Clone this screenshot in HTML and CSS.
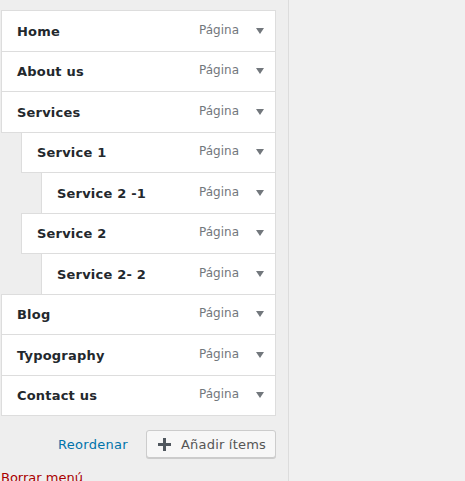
FILE: index.html
```html
<!DOCTYPE html>
<html lang="es">
<head>
  <meta charset="UTF-8" />
  <title>Menú</title>
  <link rel="stylesheet" href="styles.css">
</head>
<body>
  <div class="panel">
    <ul class="menu">
      <li class="item depth-0"><span class="item-title">Home</span><span class="item-type">Página</span><span class="toggle"></span></li>
      <li class="item depth-0"><span class="item-title">About us</span><span class="item-type">Página</span><span class="toggle"></span></li>
      <li class="item depth-0"><span class="item-title">Services</span><span class="item-type">Página</span><span class="toggle"></span></li>
      <li class="item depth-1"><span class="item-title">Service 1</span><span class="item-type">Página</span><span class="toggle"></span></li>
      <li class="item depth-2"><span class="item-title">Service 2 -1</span><span class="item-type">Página</span><span class="toggle"></span></li>
      <li class="item depth-1"><span class="item-title">Service 2</span><span class="item-type">Página</span><span class="toggle"></span></li>
      <li class="item depth-2"><span class="item-title">Service 2- 2</span><span class="item-type">Página</span><span class="toggle"></span></li>
      <li class="item depth-0"><span class="item-title">Blog</span><span class="item-type">Página</span><span class="toggle"></span></li>
      <li class="item depth-0"><span class="item-title">Typography</span><span class="item-type">Página</span><span class="toggle"></span></li>
      <li class="item depth-0"><span class="item-title">Contact us</span><span class="item-type">Página</span><span class="toggle"></span></li>
    </ul>

    <div class="actions">
      <a href="#" class="reorder">Reordenar</a>
      <button class="add-items">
        <svg class="plus" width="13" height="13" viewBox="0 0 13 13"><path d="M6.5 0v13M0 6.5h13" stroke="#50575e" stroke-width="3"/></svg>
        Añadir ítems
      </button>
    </div>

    <a href="#" class="delete">Borrar menú</a>
  </div>
  <div class="preview"></div>
</body>
</html>
```

FILE: styles.css
```css
body {
  margin: 0;
  background-color: #eeeeee;
  font-family: "DejaVu Sans", sans-serif;
  display: flex;
  height: 100vh;
  overflow: hidden;
}

.panel {
  width: 289px;
  padding: 10px 0 0 1px;
  border-right: 1px solid #dcdcdc;
  box-sizing: border-box;
}

.preview {
  flex: 1;
  background-color: #f0f0f0;
}

.menu {
  list-style: none;
  margin: 0;
  padding: 0;
  width: 275px;
}

.item {
  display: flex;
  align-items: center;
  height: 41.5px;
  margin-top: -1px;
  padding: 0 11px 0 15px;
  background-color: #fff;
  border: 1px solid #dddddd;
  box-sizing: border-box;
}

.item:first-child {
  margin-top: 0;
}

.depth-1 {
  margin-left: 20px;
}

.depth-2 {
  margin-left: 40px;
}

.item-title {
  flex: 1;
  font-size: 13px;
  font-weight: bold;
  letter-spacing: 0.2px;
  color: #23282d;
  padding-top: 1px;
}

.item-type {
  font-size: 12px;
  color: #72777c;
  margin-top: -2px;
}

.toggle {
  width: 0;
  height: 0;
  margin-left: 17px;
  border-left: 4px solid transparent;
  border-right: 4px solid transparent;
  border-top: 6px solid #72777c;
}

.actions {
  display: flex;
  align-items: center;
  justify-content: flex-end;
  gap: 18px;
  width: 275px;
  margin-top: 14px;
}

.reorder {
  font-size: 13px;
  letter-spacing: 0.3px;
  color: #0073aa;
  text-decoration: none;
}

.add-items {
  height: 28px;
  padding: 0 9px 0 11px;
  font-family: "DejaVu Sans", sans-serif;
  font-size: 13px;
  letter-spacing: 0.2px;
  color: #555;
  background-color: #f7f7f7;
  border: 1px solid #cccccc;
  border-radius: 3px;
  box-shadow: 0 1px 0 #cccccc;
  display: flex;
  align-items: center;
  gap: 10px;
}

.delete {
  display: block;
  margin-top: 12px;
  font-size: 13px;
  color: #a00;
  text-decoration: none;
}
```
